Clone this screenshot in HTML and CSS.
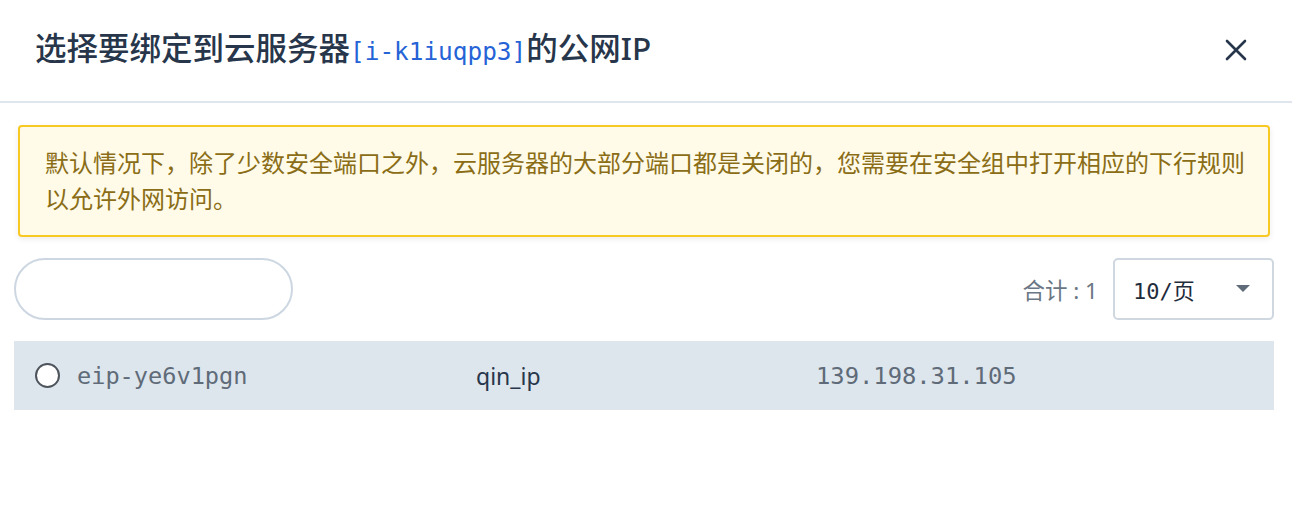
FILE: index.html
```html
<!DOCTYPE html>
<html lang="zh-CN">
<head>
<meta charset="utf-8">
<title>选择公网IP</title>
<link rel="stylesheet" href="styles.css">
</head>
<body>
<div class="dialog">
  <div class="dialog-header">
    <h1 class="title">选择要绑定到云服务器<span class="mono-id">[i-k1iuqpp3]</span>的公网IP</h1>
    <button class="close" aria-label="关闭">
      <svg width="22" height="22" viewBox="0 0 22 22"><path d="M2 2 L20 20 M20 2 L2 20" stroke="#27364a" stroke-width="2.6" stroke-linecap="round" fill="none"/></svg>
    </button>
  </div>
  <div class="dialog-body">
    <div class="alert">默认情况下，除了少数安全端口之外，云服务器的大部分端口都是关闭的，您需要在安全组中打开相应的下行规则以允许外网访问。</div>
    <div class="toolbar">
      <input class="search" type="text">
      <div class="pager">
        <span class="total">合计 : 1</span>
        <div class="select">
          <span class="select-value">10/页</span>
          <svg class="caret" width="14" height="8" viewBox="0 0 14 8"><path d="M0 0 L14 0 L7 7 Z" fill="#5f6b78"/></svg>
        </div>
      </div>
    </div>
    <div class="row">
      <span class="radio"></span>
      <span class="cell cell-id">eip-ye6v1pgn</span>
      <span class="cell cell-name">qin_ip</span>
      <span class="cell cell-ip">139.198.31.105</span>
    </div>
  </div>
</div>
</body>
</html>
```
FILE: styles.css
```css
* { box-sizing: border-box; }
html, body { margin: 0; padding: 0; background: #fff; }
body {
  font-family: "Noto Sans", "Noto Sans CJK SC", sans-serif;
  color: #27364a;
}
.dialog { width: 1292px; }
.dialog-header {
  height: 103px;
  border-bottom: 2px solid #dfe6ed;
  display: flex;
  align-items: center;
  justify-content: space-between;
  padding: 0 45px 0 35px;
}
.title {
  margin: 0 0 2px 0;
  font-family: "Noto Sans", "Noto Sans CJK SC", sans-serif;
  font-size: 31.5px;
  font-weight: 500;
  color: #27364a;
  line-height: 40px;
}
.mono-id {
  font-family: "DejaVu Sans Mono", monospace;
  font-size: 24.4px;
  font-weight: 400;
  color: #2563d6;
}
.close {
  border: 0;
  background: none;
  padding: 0;
  margin: 0 0 2px 0;
  width: 22px;
  height: 22px;
  display: flex;
}
.dialog-body { padding: 22px 18px 0 14px; }
.alert {
  margin: 0 4px 0 4px;
  border: 2px solid #f8c923;
  border-radius: 4px;
  background: #fffbe8;
  color: #8a6d16;
  font-family: "Noto Sans CJK SC", sans-serif;
  font-size: 24px;
  line-height: 36px;
  padding: 17px 20px 19px 25px;
  box-shadow: 0 2px 6px rgba(0,0,0,0.08);
}
.toolbar {
  margin-top: 21px;
  display: flex;
  justify-content: space-between;
  align-items: center;
}
.search {
  width: 279px;
  height: 62px;
  border: 2px solid #cdd7e2;
  border-radius: 31px;
  outline: none;
  background: #fff;
  padding: 0 20px;
}
.pager { display: flex; align-items: center; gap: 15px; }
.total {
  font-family: "Noto Sans", "Noto Sans CJK SC", sans-serif;
  font-size: 22.5px;
  color: #6b7785;
}
.select {
  width: 161px;
  height: 62px;
  border: 2px solid #cfd7e0;
  border-radius: 5px;
  display: flex;
  align-items: center;
  justify-content: space-between;
  padding: 0 22px 0 18px;
}
.select-value {
  font-family: "DejaVu Sans Mono", "Noto Sans CJK SC", monospace;
  font-size: 22px;
  color: #1f2c3c;
}
.row {
  margin-top: 21px;
  height: 69px;
  background: #dde5ed;
  display: flex;
  align-items: center;
  padding-left: 21px;
}
.radio {
  width: 25px;
  height: 25px;
  border: 2px solid #4d545c;
  border-radius: 50%;
  background: #fff;
  flex: none;
}
.cell { font-size: 23.6px; }
.cell-id {
  font-family: "DejaVu Sans Mono", monospace;
  color: #5f6b78;
  margin-left: 17px;
  width: 399px;
}
.cell-name {
  font-family: "Noto Sans", sans-serif;
  font-size: 23px;
  color: #27364a;
  width: 340px;
}
.cell-ip {
  font-family: "DejaVu Sans Mono", monospace;
  font-size: 23.8px;
  color: #5f6b78;
}
```
